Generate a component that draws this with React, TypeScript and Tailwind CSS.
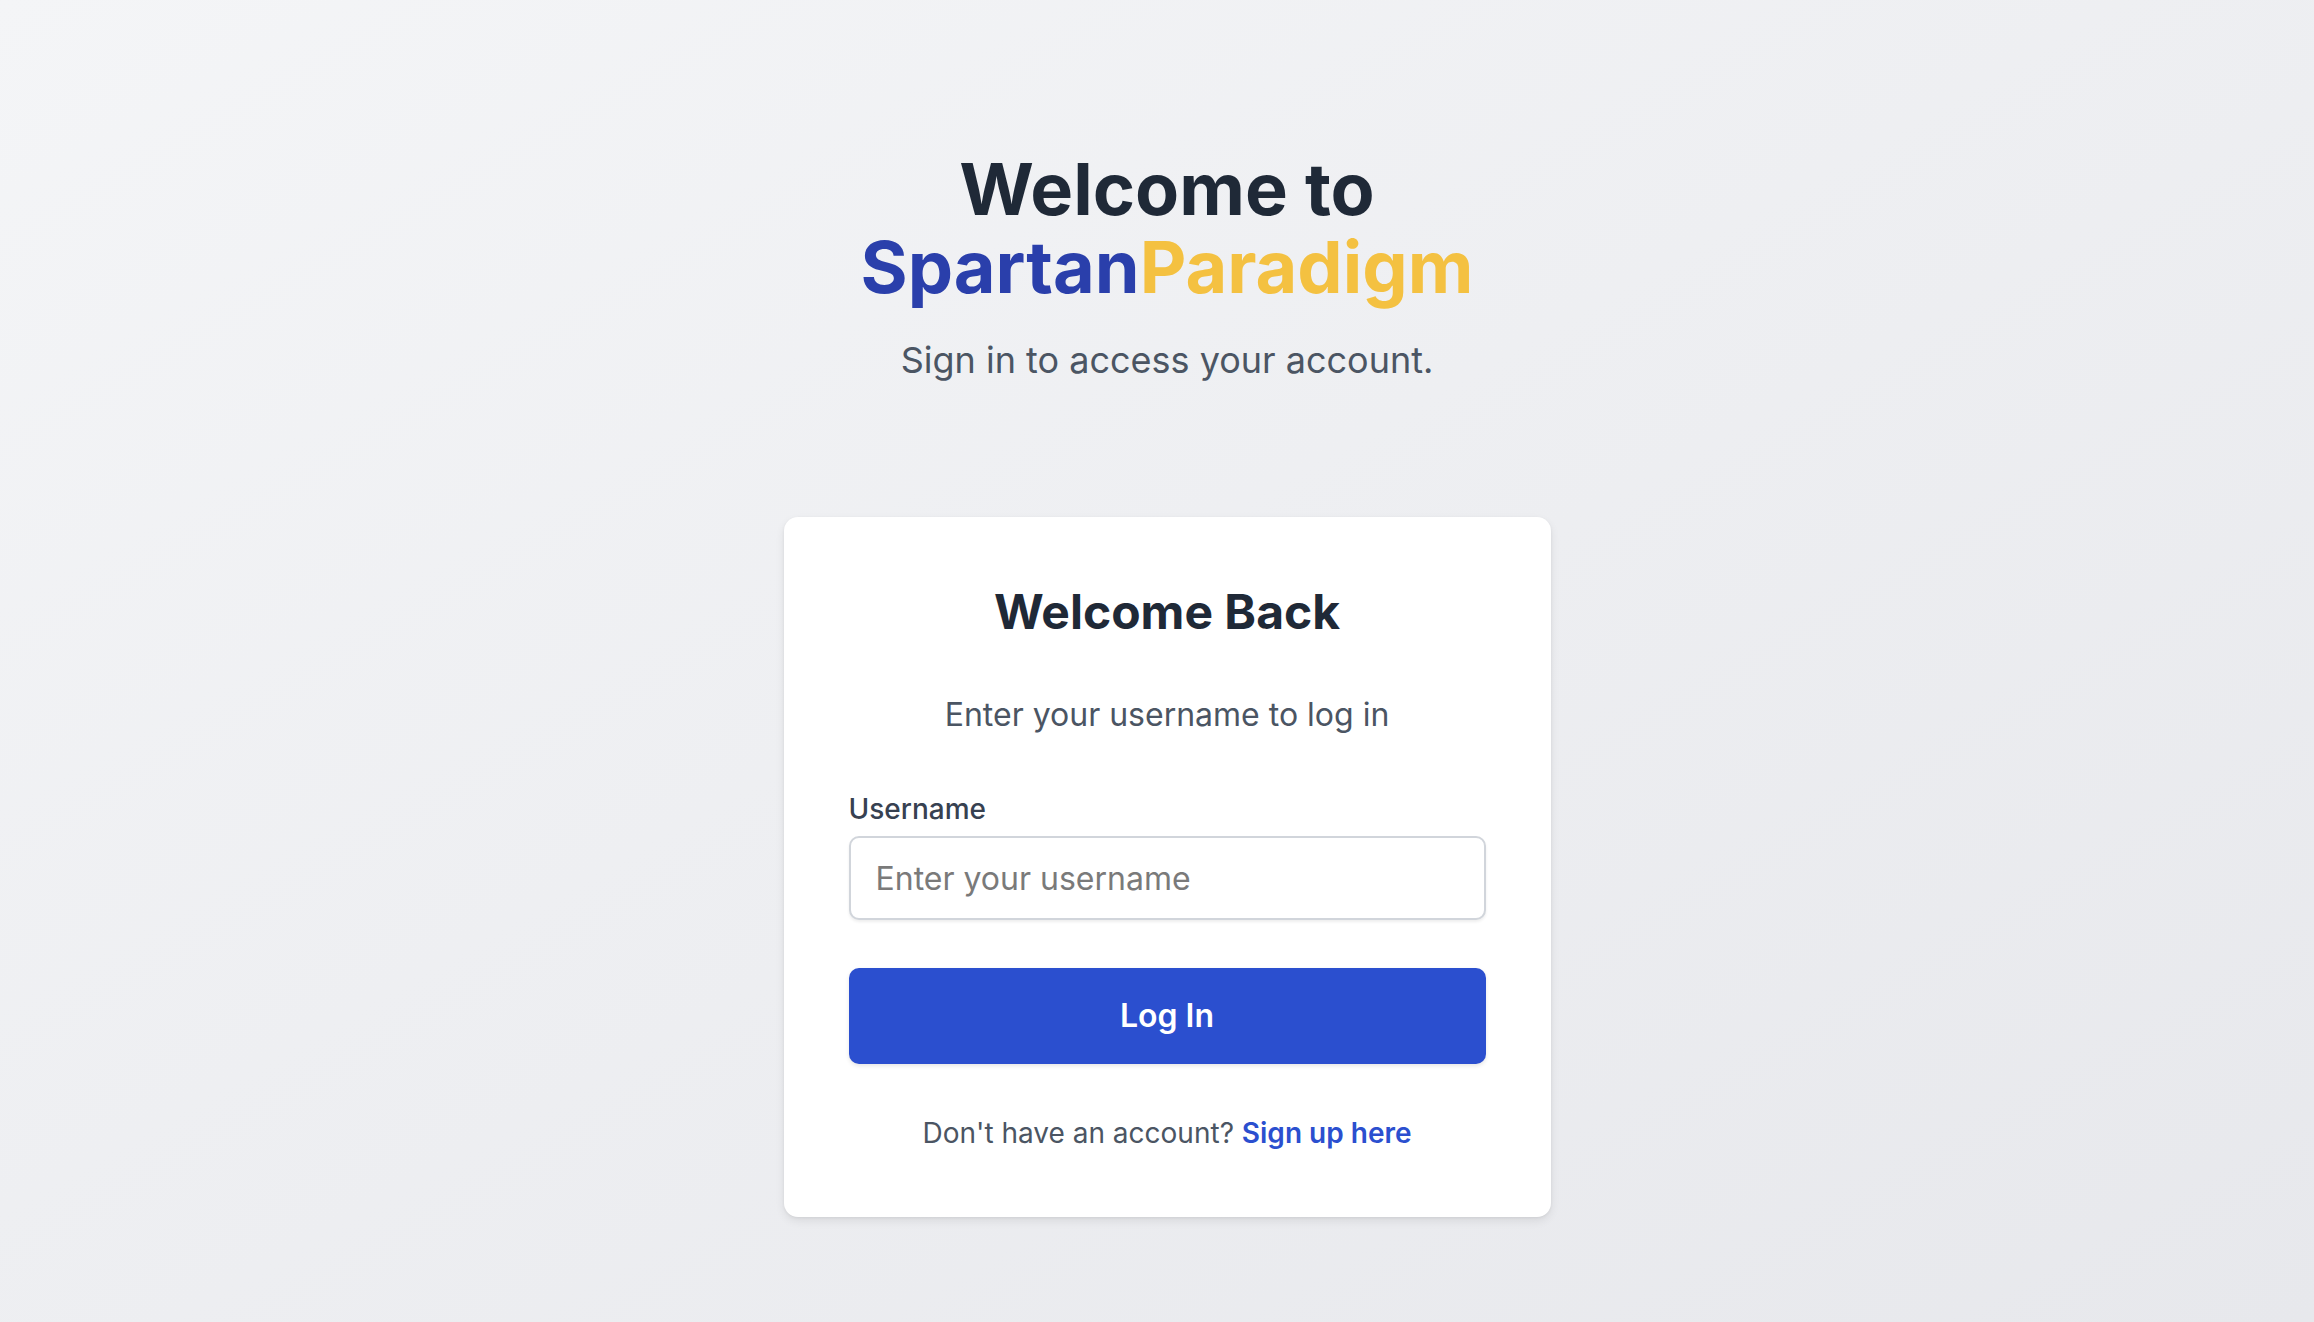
import { useState } from "react";

export default function App() {
  const [username, setUsername] = useState("");

  return (
    <div className="min-h-screen w-full bg-gradient-to-br from-[#f4f5f7] to-[#e7e8ec] font-['Inter','Noto_Sans',sans-serif] flex flex-col items-center pl-[20px]">
      <div className="flex flex-col items-center text-center pt-[150px]">
        <h1 className="text-[72px] leading-[78px] font-bold text-[#1f2937]">
          Welcome to
          <br />
          <span className="text-[#2a3fab]">Spartan</span>
          <span className="text-[#f4c141]">Paradigm</span>
        </h1>
        <p className="mt-[32px] text-[36px] leading-[44px] text-[#4b5563]">
          Sign in to access your account.
        </p>
      </div>

      <div className="mt-[135px] w-[767px] bg-white rounded-[14px] shadow-[0_4px_10px_rgba(0,0,0,0.08),0_1px_3px_rgba(0,0,0,0.06)] px-[65px] pt-[65px] pb-[66px] flex flex-col">
        <h2 className="text-center text-[48px] leading-[60px] font-bold text-[#1f2937]">
          Welcome Back
        </h2>
        <p className="mt-[52px] text-center text-[32px] leading-[42px] text-[#4b5563]">
          Enter your username to log in
        </p>

        <label
          htmlFor="username"
          className="mt-[55px] text-[28px] leading-[36px] font-medium text-[#374151]"
        >
          Username
        </label>
        <input
          id="username"
          type="text"
          value={username}
          onChange={(e) => setUsername(e.target.value)}
          placeholder="Enter your username"
          className="mt-[9px] h-[84px] w-full rounded-[10px] border-2 border-[#d1d5db] bg-white px-[25px] text-[32px] text-[#1f2937] placeholder:text-[#7a7a7a] shadow-[0_2px_3px_rgba(0,0,0,0.07)] outline-none"
        />

        <button className="mt-[48px] h-[96px] w-full rounded-[10px] bg-[#2b4fcf] text-white text-[32px] font-semibold shadow-[0_2px_4px_rgba(0,0,0,0.1)]">
          Log In
        </button>

        <p className="mt-[51px] text-center text-[28px] leading-[36px] text-[#4b5563]">
          Don't have an account?{" "}
          <a href="#" className="font-semibold text-[#2b4fcf]">
            Sign up here
          </a>
        </p>
      </div>
    </div>
  );
}
